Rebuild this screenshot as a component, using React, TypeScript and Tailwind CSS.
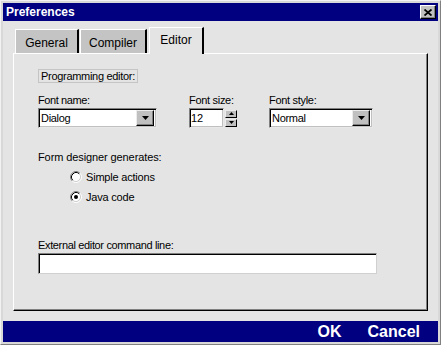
import React from "react";

const FONT = { fontFamily: '"Liberation Sans", Arial, sans-serif' };

function CloseButton() {
  return (
    <div className="w-[16px] h-[14px] bg-[#c0c0c0] border-t border-l border-t-white border-l-white border-r border-b border-r-black border-b-black shadow-[inset_-1px_-1px_0_#808080] flex items-center justify-center">
      <svg width="8" height="7" viewBox="0 0 8 7">
        <path d="M0.5 0.5 L7.5 6.5 M7.5 0.5 L0.5 6.5" stroke="#000" strokeWidth="1.8" />
      </svg>
    </div>
  );
}

function DownArrow() {
  return (
    <svg width="7" height="4" viewBox="0 0 7 4">
      <polygon points="0,0 7,0 3.5,4" fill="#000" />
    </svg>
  );
}

function Select({ value, width }: { value: string; width: string }) {
  return (
    <div
      className={`${width} h-[20px] bg-white border border-t-[#808080] border-l-[#808080] border-r-[#e8e8e8] border-b-[#e8e8e8] shadow-[inset_1px_1px_0_#000,inset_-1px_-1px_0_#c0c0c0] flex items-center pl-[2px] pr-[2px]`}
    >
      <span className="flex-1 text-[11px] leading-[13px] text-black tracking-[-0.3px]">{value}</span>
      <div className="w-[18px] h-[16px] bg-[#c0c0c0] border-t border-l border-t-[#ececec] border-l-[#ececec] border-r border-b border-r-black border-b-black shadow-[inset_-1px_-1px_0_#808080] flex items-center justify-center">
        <DownArrow />
      </div>
    </div>
  );
}

function SpinBtn({ up }: { up?: boolean }) {
  return (
    <div className="w-[12px] h-[8px] bg-[#c0c0c0] border-t border-l border-t-[#ececec] border-l-[#ececec] border-r border-b border-r-black border-b-black flex items-center justify-center">
      <svg width="5" height="3" viewBox="0 0 5 3">
        <polygon points={up ? "0,3 5,3 2.5,0" : "0,0 5,0 2.5,3"} fill="#000" />
      </svg>
    </div>
  );
}

function Radio({ checked, label }: { checked?: boolean; label: string }) {
  return (
    <div className="h-[20px] flex items-center pl-[32px] gap-[4px]">
      <svg width="12" height="12" viewBox="0 0 12 12">
        <circle cx="6" cy="6" r="4.5" fill="#fff" />
        <path d="M2.11 9.89 A5.5 5.5 0 0 1 9.89 2.11" stroke="#808080" fill="none" strokeWidth="1" />
        <path d="M9.89 2.11 A5.5 5.5 0 0 1 2.11 9.89" stroke="#ffffff" fill="none" strokeWidth="1" />
        <path d="M2.82 9.18 A4.5 4.5 0 0 1 9.18 2.82" stroke="#000" fill="none" strokeWidth="1" />
        <path d="M9.18 2.82 A4.5 4.5 0 0 1 2.82 9.18" stroke="#d0d0d0" fill="none" strokeWidth="1" />
        {checked && <circle cx="6" cy="6" r="2" fill="#000" />}
      </svg>
      <span className="text-[11px] leading-[13px] text-black tracking-[-0.2px]">{label}</span>
    </div>
  );
}

export default function App() {
  return (
    <div
      style={FONT}
      className="w-[441px] h-[345px] bg-[#d8d8d8] border border-t-[#f2f2f2] border-l-[#f2f2f2] border-r-[#808080] border-b-[#808080] p-[2px] flex flex-col"
    >
      {/* Title bar */}
      <div className="h-[18px] bg-[#000080] flex items-center justify-between pl-[3px] pr-[2px]">
        <span className="text-white font-bold text-[12px] leading-[14px]">Preferences</span>
        <CloseButton />
      </div>

      {/* Body */}
      <div className="flex-1 bg-[#e4e4e4] pt-[6px] px-[10px] pb-[10px] flex flex-col">
        {/* Tabs */}
        <div className="h-[26px] flex items-end pl-[2px] relative z-10">
          <div className="w-[64px] h-[24px] bg-[#c4c4c4] border-t border-l border-t-white border-l-white border-r-2 border-r-black flex items-center justify-center text-[12px] leading-[14px] text-black pt-[2px]">
            General
          </div>
          <div className="ml-[1px] w-[67px] h-[24px] bg-[#c4c4c4] border-t border-l border-t-white border-l-white border-r-2 border-r-black flex items-center justify-center text-[12px] leading-[14px] text-black pt-[2px]">
            Compiler
          </div>
          <div className="ml-[2px] w-[55px] h-[27px] -mb-[1px] bg-[#e4e4e4] border-t border-l border-t-white border-l-white border-r-2 border-r-black flex items-center justify-center text-[12px] leading-[14px] text-black pb-[2px]">
            Editor
          </div>
        </div>

        {/* Panel */}
        <div className="flex-1 border-t border-l border-t-white border-l-white border-r border-b border-r-black border-b-black shadow-[inset_-1px_-1px_0_#808080] pl-[24px] pt-[15px] flex flex-col items-start">
          <div className="h-[14px] px-[2px] border border-[#c4c4c4] flex items-center text-[11px] leading-[12px] text-black tracking-[-0.3px]">
            Programming editor:
          </div>

          <div className="mt-[11px] flex gap-[32px]">
            <div className="flex flex-col">
              <span className="h-[13px] text-[11px] leading-[13px] text-black tracking-[-0.4px]">Font name:</span>
              <div className="mt-[1px]">
                <Select value="Dialog" width="w-[119px]" />
              </div>
            </div>
            <div className="flex flex-col">
              <span className="h-[13px] text-[11px] leading-[13px] text-black tracking-[-0.3px]">Font size:</span>
              <div className="mt-[1px] flex items-center gap-[1px]">
                <div className="w-[35px] h-[20px] bg-white border border-t-[#808080] border-l-[#808080] border-r-[#e8e8e8] border-b-[#e8e8e8] shadow-[inset_1px_1px_0_#000,inset_-1px_-1px_0_#c0c0c0] flex items-center pl-[1px] text-[11px] leading-[13px] text-black">
                  12
                </div>
                <div className="flex flex-col gap-[1px]">
                  <SpinBtn up />
                  <SpinBtn />
                </div>
              </div>
            </div>
            <div className="flex flex-col">
              <span className="h-[13px] text-[11px] leading-[13px] text-black tracking-[-0.3px]">Font style:</span>
              <div className="mt-[1px]">
                <Select value="Normal" width="w-[104px]" />
              </div>
            </div>
          </div>

          <span className="mt-[23px] h-[13px] text-[11px] leading-[13px] text-black tracking-[-0.1px]">
            Form designer generates:
          </span>
          <div className="mt-[3px] flex flex-col">
            <Radio label="Simple actions" />
            <Radio checked label="Java code" />
          </div>

          <span className="mt-[32px] h-[13px] text-[11px] leading-[13px] text-black tracking-[-0.35px]">
            External editor command line:
          </span>
          <div className="mt-[1px] w-[339px] h-[21px] bg-white border border-t-[#808080] border-l-[#808080] border-r-[#d0d0d0] border-b-[#d0d0d0] shadow-[inset_1px_1px_0_#000]" />
        </div>
      </div>

      {/* Bottom bar */}
      <div className="h-[21px] bg-[#000080] flex items-center justify-end gap-[26px] pr-[18px]">
        <span className="text-white font-bold text-[16px] leading-[18px]">OK</span>
        <span className="text-white font-bold text-[16px] leading-[18px]">Cancel</span>
      </div>
    </div>
  );
}
